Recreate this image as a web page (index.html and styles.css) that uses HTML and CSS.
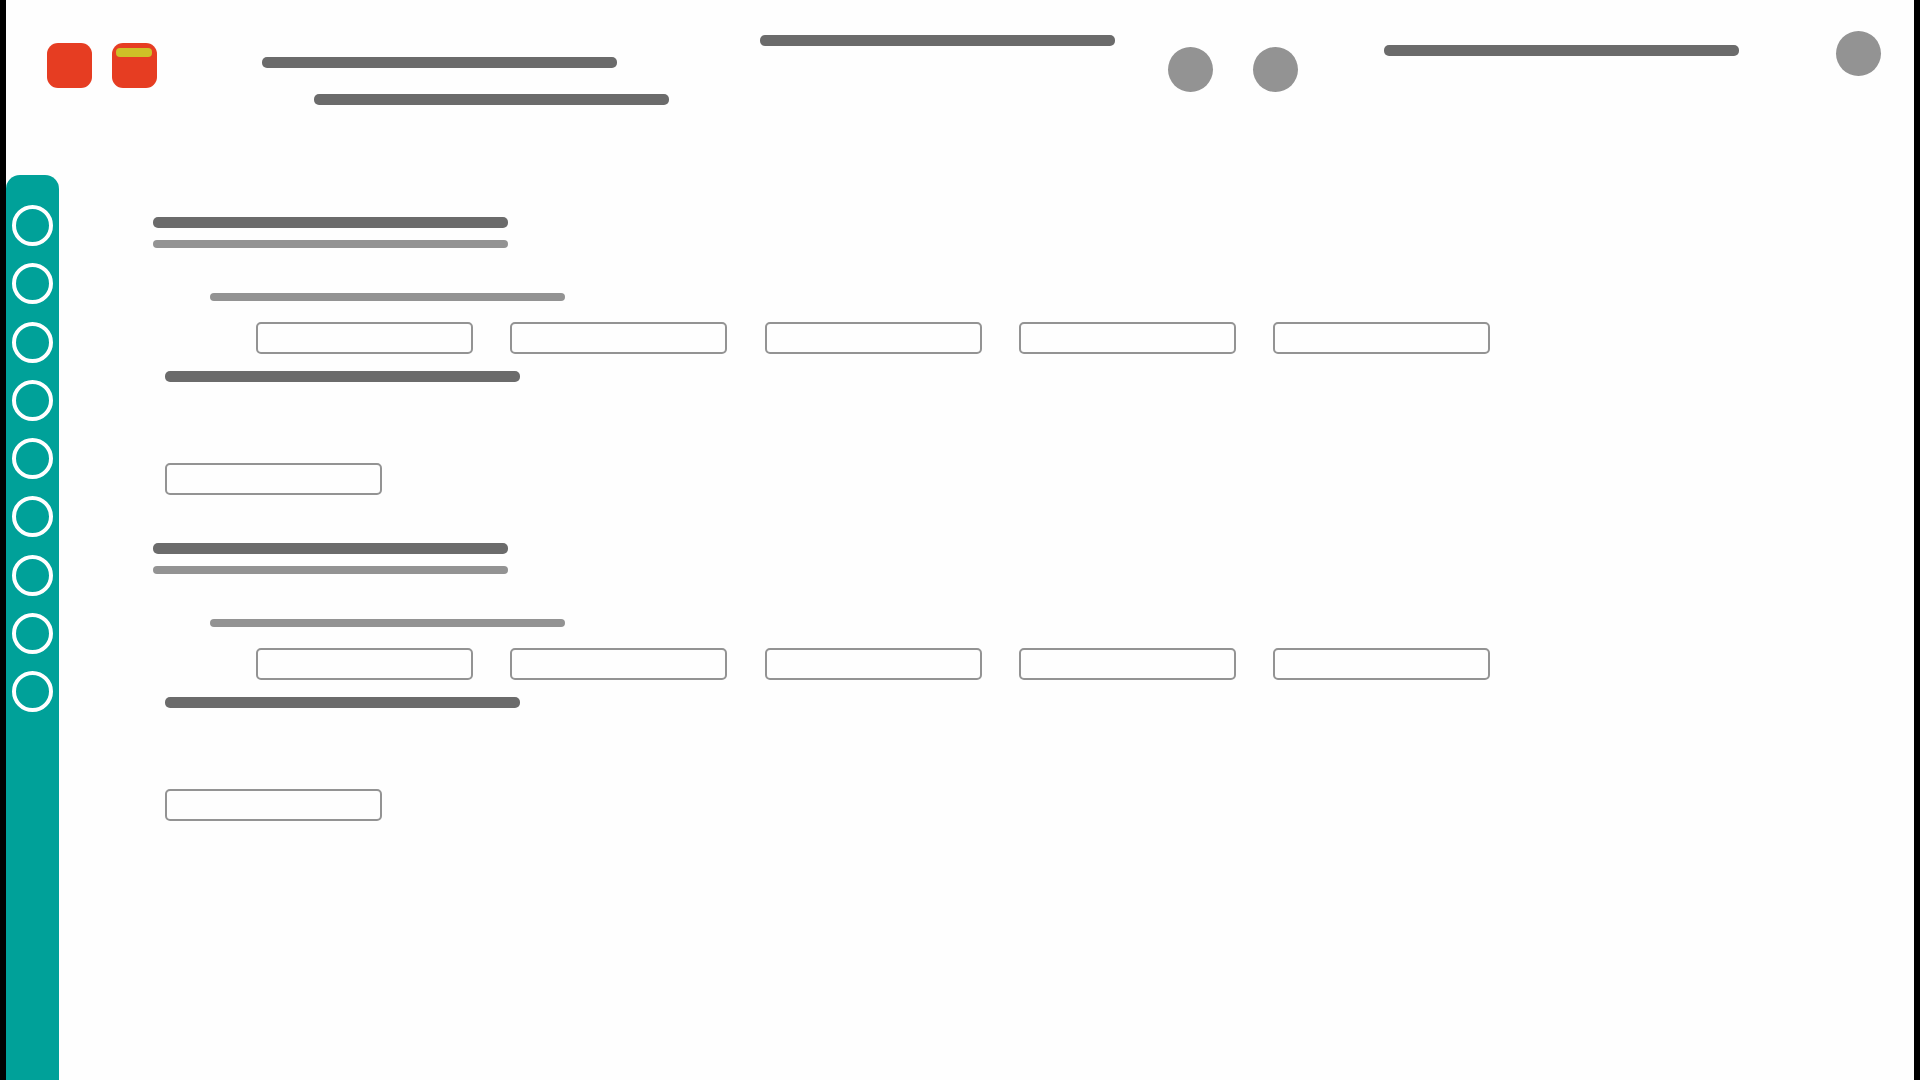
FILE: index.html
```html
<!DOCTYPE html>
<html lang="en">
<head>
  <meta charset="utf-8">
  <meta name="viewport" content="width=device-width, initial-scale=1">
  <title>Wireframe</title>
  <link rel="stylesheet" href="styles.css">
</head>
<body>

  <header class="header">
    <div class="logos">
      <button type="button" class="logo" aria-label="Home"></button>
      <button type="button" class="logo" aria-label="Apps"><span class="logo-tag"></span></button>
    </div>
    <div class="heading">
      <div class="line"></div>
      <div class="line heading-sub"></div>
    </div>
    <div class="line header-status"></div>
    <div class="actions">
      <button type="button" class="dot" aria-label="Search"></button>
      <button type="button" class="dot" aria-label="Notifications"></button>
    </div>
    <div class="line header-user"></div>
    <button type="button" class="dot avatar" aria-label="Account"></button>
  </header>

  <div class="layout">
    <!-- Side menu -->
    <nav class="sidebar" aria-label="Menu">
      <div class="menu">
        <button type="button" class="ring" aria-label="Item 1"></button>
        <button type="button" class="ring" aria-label="Item 2"></button>
        <button type="button" class="ring" aria-label="Item 3"></button>
        <button type="button" class="ring" aria-label="Item 4"></button>
        <button type="button" class="ring" aria-label="Item 5"></button>
        <button type="button" class="ring" aria-label="Item 6"></button>
        <button type="button" class="ring" aria-label="Item 7"></button>
        <button type="button" class="ring" aria-label="Item 8"></button>
        <button type="button" class="ring" aria-label="Item 9"></button>
      </div>
    </nav>

    <main class="content">
      <section class="block">
        <div class="line"></div>
        <div class="line light subtitle"></div>
        <div class="line light group-label"></div>
        <div class="fields">
          <input type="text" class="field" aria-label="Field 1">
          <input type="text" class="field" aria-label="Field 2">
          <input type="text" class="field" aria-label="Field 3">
          <input type="text" class="field" aria-label="Field 4">
          <input type="text" class="field" aria-label="Field 5">
        </div>
        <div class="extra">
          <label class="line" for="extra1"></label>
          <input type="text" class="field" id="extra1" aria-label="Extra field">
        </div>
      </section>

      <section class="block">
        <div class="line"></div>
        <div class="line light subtitle"></div>
        <div class="line light group-label"></div>
        <div class="fields">
          <input type="text" class="field" aria-label="Field 1">
          <input type="text" class="field" aria-label="Field 2">
          <input type="text" class="field" aria-label="Field 3">
          <input type="text" class="field" aria-label="Field 4">
          <input type="text" class="field" aria-label="Field 5">
        </div>
        <div class="extra">
          <label class="line" for="extra2"></label>
          <input type="text" class="field" id="extra2" aria-label="Extra field">
        </div>
      </section>
    </main>
  </div>

</body>
</html>
```
FILE: styles.css
```css
* {
  box-sizing: border-box;
}
body {
  display: flex;
  flex-direction: column;
  min-height: 100vh;
  margin: 0;
  border: solid #000000;
  border-width: 0 6px;
  background: #fefefe;
  font-family: Roboto, Arial, sans-serif;
}
button {
  padding: 0;
  border: none;
  cursor: pointer;
}

/* Placeholder lines */
.line {
  display: block;
  width: 355px;
  max-width: 100%;
  height: 11px;
  border-radius: 5px;
  background: #6b6b6b;
}
.line.light {
  height: 8px;
  border-radius: 4px;
  background: #939393;
}

/* Header */
.header {
  display: flex;
  align-items: flex-start;
  min-height: 175px;
  padding: 31px 33px 0 41px;
}
.logos {
  display: flex;
  gap: 20px;
  margin: 12px 105px 0 0;
}
.logo {
  display: flex;
  align-items: flex-start;
  width: 45px;
  height: 45px;
  padding: 5px 4px;
  border-radius: 11px;
  background: #e63d22;
}
.logo-tag {
  width: 36px;
  height: 9px;
  border-radius: 4px;
  background: #cec127;
}
.heading {
  margin: 26px 91px 0 0;
}
.heading-sub {
  margin: 26px 0 0 52px;
}
.header-status {
  margin: 4px 53px 0 0;
}
.actions {
  display: flex;
  gap: 40px;
  margin: 16px 86px 0 0;
}
.header-user {
  margin-top: 14px;
}
.dot {
  flex-shrink: 0;
  width: 45px;
  height: 45px;
  border-radius: 50%;
  background: #939393;
}
.avatar {
  margin-left: auto;
}

/* Side menu */
.layout {
  display: flex;
  flex: 1;
}
.sidebar {
  flex-shrink: 0;
  padding: 30px 6px;
  border-radius: 14px 14px 0 0;
  background: #00a199;
}
.menu {
  display: flex;
  flex-direction: column;
  justify-content: space-between;
  height: 507px;
}
.ring {
  width: 41px;
  height: 41px;
  border: 4px solid #ffffff;
  border-radius: 50%;
  background: none;
}

/* Content */
.content {
  flex: 1;
  min-width: 0;
  padding: 42px 94px 0;
}
.block {
  margin-bottom: 48px;
}
.subtitle {
  margin-top: 12px;
}
.group-label {
  margin: 45px 0 21px 57px;
}
.fields {
  display: flex;
  justify-content: space-between;
  max-width: 1337px;
  padding-left: 103px;
}
.field {
  width: 217px;
  min-width: 0;
  height: 32px;
  padding: 0 8px;
  border: 2px solid #939393;
  border-radius: 5px;
  background: none;
}
.extra {
  display: flex;
  flex-direction: column;
  align-items: flex-start;
  gap: 81px;
  padding: 17px 0 0 12px;
}
```
